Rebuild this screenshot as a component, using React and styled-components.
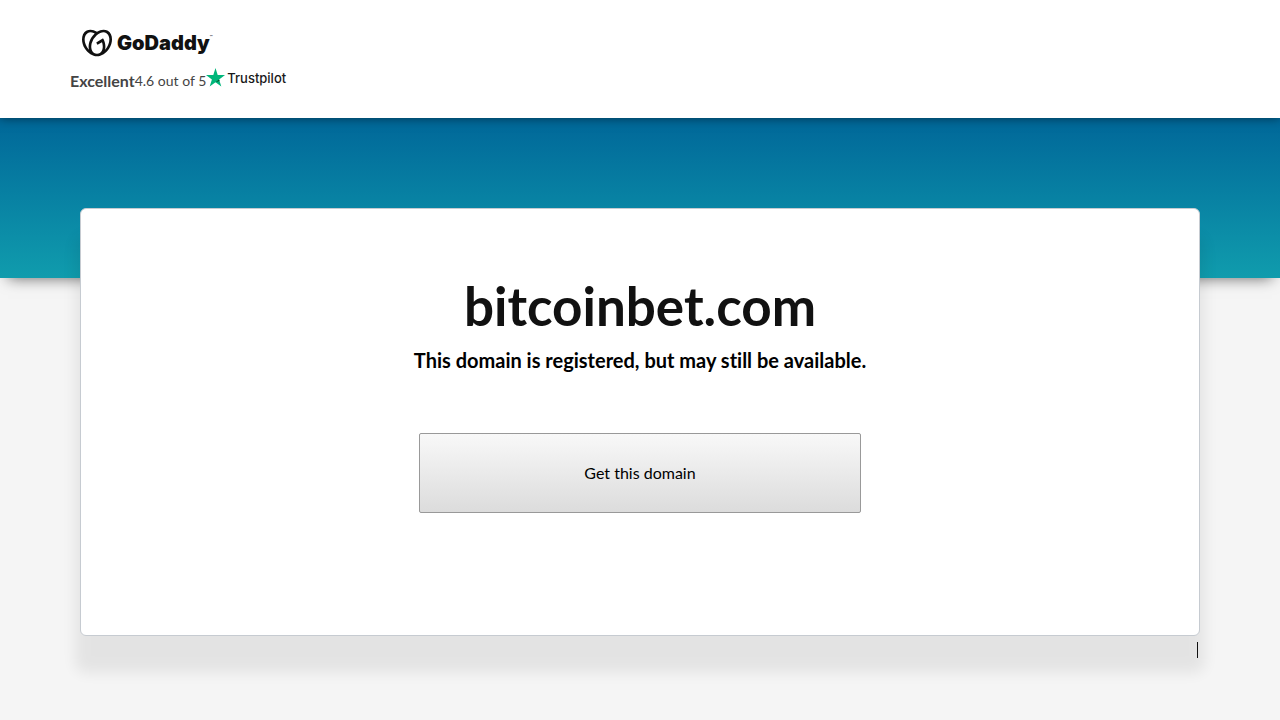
import React from 'react';
import styled, { createGlobalStyle } from 'styled-components';
import { SiGodaddy } from 'react-icons/si';

const GlobalStyle = createGlobalStyle`
  * {
    box-sizing: border-box;
  }
  body {
    margin: 0;
    background: #f5f5f5;
    color: #111;
    font-family: Lato, "Liberation Sans", sans-serif;
    font-size: 16px;
    font-variant-ligatures: none;
  }
`;

const Page = styled.div`
  min-height: 100vh;
`;

const Header = styled.header`
  position: relative;
  padding: 27px 70px 26px;
  background: white;
  box-shadow: 0 0 10px rgba(0, 0, 0, 0.5);
`;

const Brand = styled.a`
  display: flex;
  align-items: center;
  gap: 5px;
  height: 31px;
  padding-left: 12px;
  color: #111;
  text-decoration: none;
`;

const BrandName = styled.span`
  font-family: Inter, sans-serif;
  font-size: 20px;
  font-weight: 900;
  line-height: 30px;
`;

const Trademark = styled.small`
  align-self: flex-start;
  margin-left: -5px;
  font-size: 4px;
  line-height: 20px;
`;

const Rating = styled.div`
  display: flex;
  align-items: center;
  height: 24px;
  margin-top: 10px;
  color: #444;
  font-size: 14px;
`;

const Excellent = styled.strong`
  font-size: 16px;
`;

const Trustpilot = styled.a`
  display: flex;
  align-items: center;
  gap: 1px;
  height: 24px;
  padding-bottom: 4px;
  color: #191919;
  font-family: Inter, sans-serif;
  font-size: 13px;
  font-weight: 500;
  line-height: 24px;
  text-decoration: none;
`;

const Hero = styled.div`
  height: 160px;
  background: linear-gradient(#006799, #109cad);
  box-shadow: 0 8px 14px -8px rgba(0, 0, 0, 0.6);
`;

const Main = styled.main`
  position: relative;
  margin: -70px 80px 0;
`;

const Card = styled.section`
  display: flex;
  flex-direction: column;
  align-items: center;
  padding: 66px 24px 122px;
  background: white;
  border: 1px solid #c6cbd1;
  border-radius: 6px;
  box-shadow: 0 32px 14px 5px rgba(0, 0, 0, 0.07);
`;

const Domain = styled.h1`
  margin: 0;
  font-size: 53px;
  line-height: 62px;
`;

const Status = styled.h2`
  margin: 8px 0 0;
  color: black;
  font-size: 20px;
  line-height: 30px;
`;

const GetButton = styled.button`
  width: 442px;
  max-width: 100%;
  height: 80px;
  margin-top: 58px;
  padding: 0 16px 2px;
  background: linear-gradient(#f8f8f8, #dcdcdc);
  border: 1px solid #999;
  border-radius: 2px;
  color: black;
  font-family: inherit;
  font-size: 16px;
  cursor: pointer;
`;

const Footer = styled.footer`
  display: flex;
  justify-content: flex-end;
  padding: 6px 2px;
`;

const Divider = styled.span`
  height: 16px;
  border-right: 1px solid #111;
`;

const Star = () => (
  <svg width="20" height="20" viewBox="0 0 20 20" aria-hidden="true">
    <path fill="#00b67a" d="M9.5 0l2.2 7.1H19l-5.9 4.4 2.2 7-5.8-4.3-5.8 4.3 2.2-7L0 7.1h7.3z" />
    <path fill="#005128" d="M13.6 13l-.5-1.5-3.6 2.7z" />
  </svg>
);

const App = () => (
  <Page>
    <GlobalStyle />
    <Header>
      <Brand href="/">
        <SiGodaddy size={30} aria-hidden="true" />
        <BrandName>GoDaddy</BrandName>
        <Trademark>™</Trademark>
      </Brand>
      <Rating>
        <Excellent>Excellent</Excellent>
        <span>4.6 out of 5</span>
        <Trustpilot href="/">
          <Star />
          Trustpilot
        </Trustpilot>
      </Rating>
    </Header>
    <Hero />
    <Main>
      <Card>
        <Domain>bitcoinbet.com</Domain>
        <Status>This domain is registered, but may still be available.</Status>
        <GetButton type="button">Get this domain</GetButton>
      </Card>
      <Footer>
        <Divider />
      </Footer>
    </Main>
  </Page>
);

export default App;
